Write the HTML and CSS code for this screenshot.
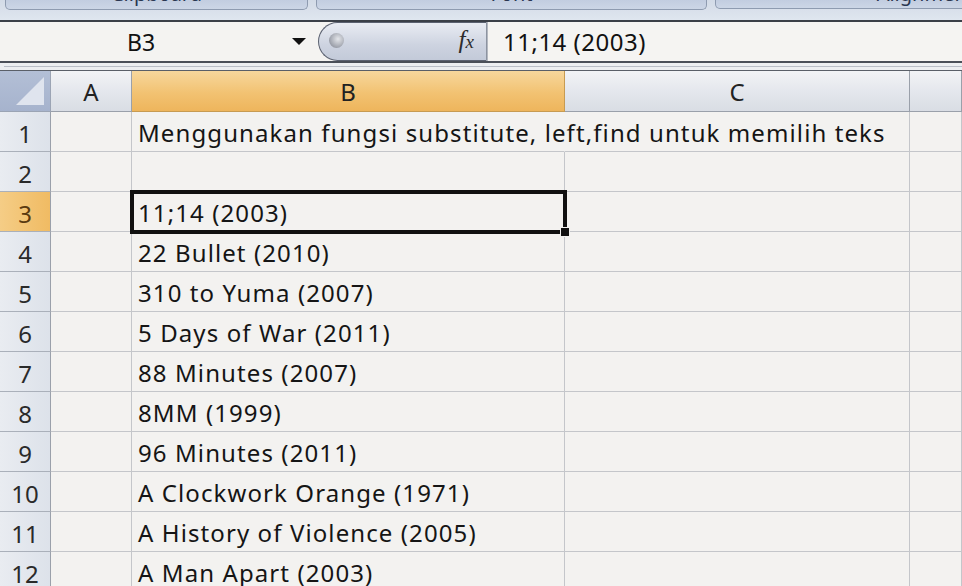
FILE: index.html
```html
<!DOCTYPE html>
<html>
<head>
<meta charset="utf-8">
<link rel="stylesheet" href="styles.css">
</head>
<body>
<div class="app">
  <div class="ribbon">
    <div class="group g1"><span>Clipboard</span></div>
    <div class="group g2"><span>Font</span></div>
    <div class="group g3"><span>Alignment</span></div>
  </div>
  <div class="fbar">
    <div class="namebox">
      <span class="ref">B3</span>
      <span class="arrow"></span>
    </div>
    <div class="pill">
      <span class="knob"></span>
      <span class="fx"><i>f</i><i class="x">x</i></span>
    </div>
    <div class="formula">11;14 (2003)</div>
  </div>
  <div class="strip"><div class="stripline"></div></div>
  <div class="sheet">
    <div class="corner"><span class="tri"></span></div>
    <div class="ch">A</div>
    <div class="ch sel">B</div>
    <div class="ch">C</div>
    <div class="ch last"></div>

    <div class="rh">1</div><div class="c"></div><div class="c b spill">Menggunakan fungsi substitute, left,find untuk memilih teks</div><div class="c"></div><div class="c"></div>
    <div class="rh">2</div><div class="c"></div><div class="c b"></div><div class="c"></div><div class="c"></div>
    <div class="rh sel">3</div><div class="c"></div><div class="c b active">11;14 (2003)<span class="handle"></span></div><div class="c"></div><div class="c"></div>
    <div class="rh">4</div><div class="c"></div><div class="c b">22 Bullet (2010)</div><div class="c"></div><div class="c"></div>
    <div class="rh">5</div><div class="c"></div><div class="c b">310 to Yuma (2007)</div><div class="c"></div><div class="c"></div>
    <div class="rh">6</div><div class="c"></div><div class="c b">5 Days of War (2011)</div><div class="c"></div><div class="c"></div>
    <div class="rh">7</div><div class="c"></div><div class="c b">88 Minutes (2007)</div><div class="c"></div><div class="c"></div>
    <div class="rh">8</div><div class="c"></div><div class="c b">8MM (1999)</div><div class="c"></div><div class="c"></div>
    <div class="rh">9</div><div class="c"></div><div class="c b">96 Minutes (2011)</div><div class="c"></div><div class="c"></div>
    <div class="rh">10</div><div class="c"></div><div class="c b">A Clockwork Orange (1971)</div><div class="c"></div><div class="c"></div>
    <div class="rh">11</div><div class="c"></div><div class="c b">A History of Violence (2005)</div><div class="c"></div><div class="c"></div>
    <div class="rh">12</div><div class="c"></div><div class="c b">A Man Apart (2003)</div><div class="c"></div><div class="c"></div>
  </div>
</div>
</body>
</html>
```

FILE: styles.css
```css
html, body {
  margin: 0;
  padding: 0;
  background: #f3f2f0;
  overflow: hidden;
}
.app {
  width: 962px;
  height: 586px;
  overflow: hidden;
  font-family: "Noto Sans", "Open Sans", sans-serif;
  color: #1a1a1a;
}
.ribbon {
  height: 20px;
  background: linear-gradient(#d3dbe7, #dfe6ef);
  display: flex;
  gap: 8px;
  padding-left: 5px;
  box-sizing: border-box;
  overflow: hidden;
}
.group {
  flex-shrink: 0;
  height: 9px;
  border: 1px solid #8e9bb0;
  border-top: none;
  border-radius: 0 0 5px 5px;
  background: linear-gradient(#c2cde0, #ccd6e6);
  display: flex;
  justify-content: center;
  overflow: hidden;
  position: relative;
}
.group span {
  font-size: 20px;
  line-height: 20px;
  margin-top: -16px;
  color: #2a3650;
}
.g1 { width: 301px; }
.g2 { width: 389px; }
.g3 { width: 300px; justify-content: flex-end; padding-right: 40px; box-sizing: border-box; }
.fbar {
  height: 43px;
  border-top: 2px solid #3b4048;
  border-bottom: 2px solid #4a4f58;
  box-sizing: border-box;
  display: flex;
  background: #f4f3f1;
}
.namebox {
  width: 318px;
  display: flex;
  align-items: center;
  position: relative;
  background: #f4f3f1;
}
.ref {
  font-size: 23px;
  margin-left: 127px;
  color: #111;
}
.arrow {
  position: absolute;
  left: 292px;
  top: 16px;
  width: 0;
  height: 0;
  border-left: 7px solid transparent;
  border-right: 7px solid transparent;
  border-top: 7px solid #111;
}
.pill {
  width: 169px;
  border: 1px solid #5b6170;
  border-right: 1px solid #8c93a0;
  border-radius: 26px 0 0 26px;
  background: linear-gradient(#e9ecf3, #cdd3e0 60%, #c3cad9);
  box-sizing: border-box;
  display: flex;
  align-items: center;
  position: relative;
}
.knob {
  position: absolute;
  left: 10px;
  top: 10px;
  width: 15px;
  height: 15px;
  border-radius: 50%;
  background: radial-gradient(circle at 60% 40%, #e4e6ea, #9a9ea8 70%, #c9ccd4);
}
.fx {
  margin-left: auto;
  margin-right: 12px;
  font-family: "Liberation Serif", serif;
  font-size: 25px;
  color: #2c2c2c;
  margin-top: -4px;
}
.fx .x {
  font-size: 19px;
  margin-left: 0;
}
.formula {
  flex: 1;
  font-size: 24px;
  letter-spacing: 0.5px;
  display: flex;
  align-items: center;
  padding-left: 15px;
  background: #f5f4f2;
  border-left: 1px solid #b4b8c0;
  color: #111;
}
.strip {
  height: 8px;
  background: #eceef1;
  border-bottom: 1px solid #5a5f68;
  box-sizing: border-box;
  padding-top: 3px;
}
.stripline {
  height: 1px;
  background: #b9bec7;
  margin-left: 4px;
}
.sheet {
  display: grid;
  grid-template-columns: 51px 81px 433px 345px 1fr;
  grid-template-rows: 41px repeat(12, 40px);
}
.corner {
  background: linear-gradient(#b3bfd6, #a6b3cd);
  border-right: 1px solid #9ba4b4;
  border-bottom: 1px solid #9ba4b4;
  position: relative;
}
.tri {
  position: absolute;
  right: 6px;
  bottom: 6px;
  width: 0;
  height: 0;
  border-left: 28px solid transparent;
  border-bottom: 28px solid #dfe4ee;
}
.ch {
  background: linear-gradient(#f2f3f6, #e3e6ec 55%, #d9dde4);
  border-right: 1px solid #9aa0aa;
  border-bottom: 1px solid #9aa0aa;
  display: flex;
  align-items: center;
  justify-content: center;
  font-size: 24px;
  color: #222;
}
.ch.sel {
  background: linear-gradient(#f7d79c, #f2c272 55%, #eeb55c);
  border-right-color: #c79b52;
  border-bottom-color: #c79b52;
}
.rh {
  background: linear-gradient(90deg, #e9ecf1, #dde2ea);
  border-right: 1px solid #9aa0aa;
  border-bottom: 1px solid #aab0ba;
  display: flex;
  align-items: center;
  justify-content: center;
  font-size: 24px;
  color: #2a2a2a;
  padding-top: 3px;
  box-sizing: border-box;
}
.rh.sel {
  background: linear-gradient(90deg, #f5cd86, #f0bb63);
  color: #5a3a10;
}
.c {
  border-right: 1px solid #c4c6ca;
  border-bottom: 1px solid #c4c6ca;
  background: #f3f2f0;
  font-size: 24px;
  letter-spacing: 1.1px;
  display: flex;
  align-items: center;
  padding-left: 6px;
  padding-top: 2px;
  box-sizing: border-box;
  white-space: nowrap;
  color: #151515;
}
.spill {
  position: relative;
  z-index: 1;
  border-right-color: transparent;
}
.active {
  position: relative;
  outline: 4px solid #111;
  outline-offset: -2px;
  z-index: 2;
}
.handle {
  position: absolute;
  right: -6px;
  bottom: -6px;
  width: 8px;
  height: 8px;
  background: #111;
  border: 1px solid #f3f2f0;
}
```
